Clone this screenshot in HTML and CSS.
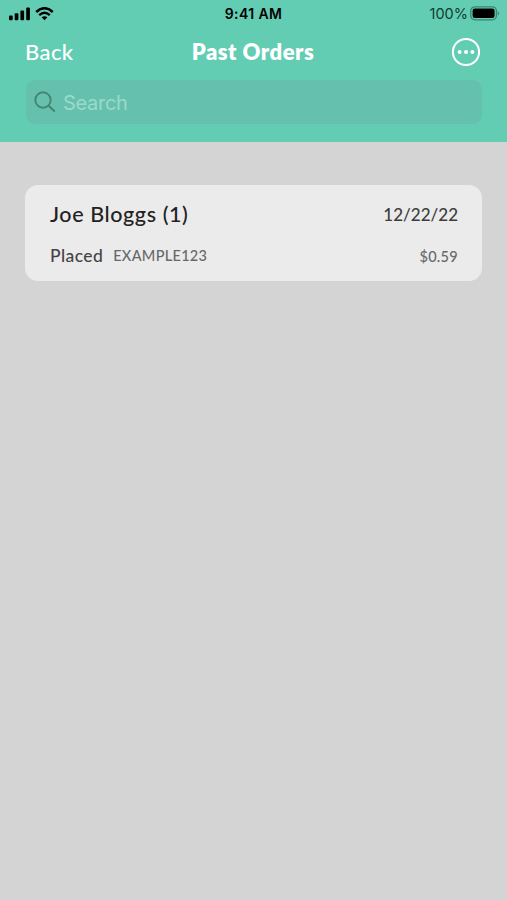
FILE: index.html
```
<!DOCTYPE html>
<html lang="en">
<head>
    <meta charset="UTF-8">
    <meta name="viewport" content="width=device-width, initial-scale=1.0">
    <title>Past Orders</title>
    <link rel="stylesheet" href="styles.css">
</head>
<body>
    <header class="header">
        <div class="status-bar">
            <div class="status-left">
                <svg class="signal" width="22" height="14" viewBox="0 0 22 14">
                    <rect x="0" y="8.6" width="3.7" height="4.6" rx="1"/>
                    <rect x="5.7" y="6.2" width="3.7" height="7" rx="1"/>
                    <rect x="11.4" y="3.4" width="3.7" height="9.8" rx="1"/>
                    <rect x="17.2" y="0.4" width="3.7" height="12.8" rx="1"/>
                </svg>
                <svg class="wifi" width="19" height="14" viewBox="0 0 19 14">
                    <path d="M1.2 4.9Q9.5 -2.4 17.8 4.9" fill="none" stroke="#000" stroke-width="2.6"/>
                    <path d="M4.2 8.1Q9.5 3.5 14.8 8.1" fill="none" stroke="#000" stroke-width="2.5"/>
                    <path d="M6.6 10.3Q9.5 8.1 12.4 10.3L9.5 13.3Z"/>
                </svg>
            </div>
            <span class="time">9:41 AM</span>
            <div class="status-right">
                <span class="percent">100%</span>
                <svg width="30" height="15" viewBox="0 0 30 15">
                    <rect x="0.8" y="0.8" width="25.6" height="13" rx="4" fill="none" stroke="#3b8570" stroke-width="1.3"/>
                    <rect x="2.6" y="2.6" width="22" height="9.4" rx="2.2"/>
                    <path d="M27.8 5Q30.4 7.3 27.8 9.7Z" fill="#3b8570"/>
                </svg>
            </div>
        </div>
        <nav class="nav">
            <a class="back">Back</a>
            <h1 class="title">Past Orders</h1>
            <a class="more">
                <svg width="30" height="30" viewBox="0 0 30 30">
                    <circle cx="15" cy="15" r="13.1" fill="none" stroke="#fff" stroke-width="2"/>
                    <circle cx="8.6" cy="15" r="2" fill="#fff"/>
                    <circle cx="15" cy="15" r="2" fill="#fff"/>
                    <circle cx="21.4" cy="15" r="2" fill="#fff"/>
                </svg>
            </a>
        </nav>
        <div class="search">
            <svg width="22" height="22" viewBox="0 0 22 22" fill="none" stroke="#438472" stroke-width="1.9" stroke-linecap="round">
                <circle cx="9" cy="9" r="7.7"/>
                <path d="M14.7 14.7L20.2 20"/>
            </svg>
            <span class="placeholder">Search</span>
        </div>
    </header>

    <main class="orders">
        <div class="order">
            <div class="order-row">
                <span class="customer">Joe Bloggs (1)</span>
                <span class="date">12/22/22</span>
            </div>
            <div class="order-row">
                <span class="order-info"><span class="state">Placed</span><span class="code">EXAMPLE123</span></span>
                <span class="price">$0.59</span>
            </div>
        </div>
    </main>
</body>
</html>
```
FILE: styles.css
```
* {
    box-sizing: border-box;
}
body {
    margin: 0;
    min-height: 100vh;
    font-family: Lato, sans-serif;
    background-color: #d4d4d4;
}
.header {
    height: 142px;
    background-color: #63cdb4;
}
.status-bar {
    display: grid;
    grid-template-columns: 1fr auto 1fr;
    align-items: center;
    height: 27px;
    padding: 0 7px 0 9px;
    font-family: Inter, sans-serif;
}
.status-left {
    display: flex;
    gap: 4px;
}
.time {
    margin-right: 2px;
    font-size: 14px;
    font-weight: 600;
    letter-spacing: 0.4px;
}
.status-right {
    display: flex;
    align-items: center;
    justify-content: flex-end;
    gap: 2px;
}
.percent {
    font-size: 14.5px;
    color: #143b31;
}
.nav {
    display: grid;
    grid-template-columns: 1fr auto 1fr;
    align-items: center;
    height: 50px;
    padding: 0 26px 0 25px;
    color: white;
}
.back {
    padding-bottom: 2px;
    font-size: 22px;
    font-weight: 500;
    letter-spacing: 0.4px;
}
.title {
    margin: 0;
    padding-bottom: 2px;
    font-size: 22px;
    font-weight: 800;
    letter-spacing: 0.5px;
}
.more {
    display: flex;
    justify-content: flex-end;
}
.search {
    display: flex;
    align-items: center;
    gap: 7px;
    height: 44px;
    margin: 3px 25px 0 26px;
    padding-left: 8px;
    border-radius: 9px;
    background-color: #65c1ad;
}
.placeholder {
    padding-top: 2px;
    font-family: Inter, sans-serif;
    font-size: 20px;
    letter-spacing: -0.3px;
    color: #9bd9ca;
}
.orders {
    padding: 43px 25px;
}
.order {
    height: 96px;
    padding: 13px 24px 0 25px;
    border-radius: 13px;
    background-color: #ebebeb;
}
.order-row {
    display: flex;
    align-items: center;
    justify-content: space-between;
    height: 32px;
    margin-bottom: 10px;
}
.customer {
    padding-bottom: 1px;
    font-size: 21.5px;
    font-weight: 500;
    letter-spacing: 0.6px;
    color: #222;
}
.date {
    font-size: 17px;
    font-weight: 500;
    color: #3c3c3c;
}
.order-info {
    display: flex;
    align-items: center;
    gap: 10px;
    padding-bottom: 2px;
}
.state {
    font-size: 17.5px;
    font-weight: 500;
    letter-spacing: 0.4px;
    color: #444;
}
.code,
.price {
    font-size: 14.5px;
    font-weight: 500;
    letter-spacing: 0.3px;
    color: #686868;
}
```
